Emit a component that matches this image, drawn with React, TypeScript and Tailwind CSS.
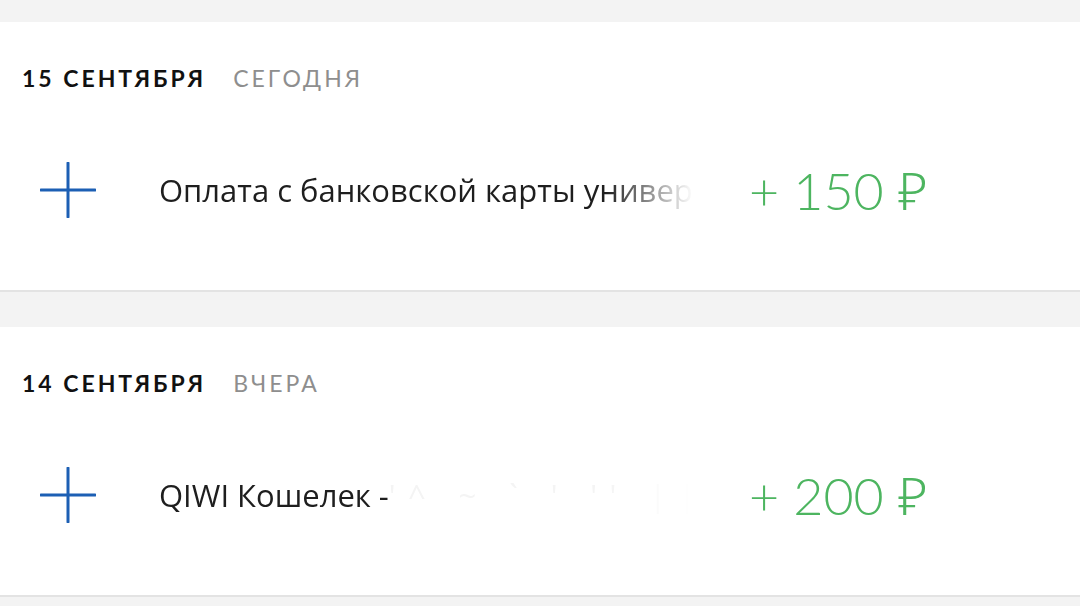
import React from "react";

function PlusIcon() {
  return (
    <svg width="56" height="56" viewBox="0 0 56 56" className="shrink-0">
      <path d="M28 1 V55 M1 28 H55" stroke="#1c5fb4" strokeWidth="3" strokeLinecap="round" fill="none" />
    </svg>
  );
}

function Card({
  date,
  rel,
  title,
  amount,
  extra,
}: {
  date: string;
  rel: string;
  title: string;
  amount: string;
  extra?: boolean;
}) {
  return (
    <div className="bg-white h-[270px] border-b-2 border-[#e3e3e3] flex flex-col">
      <div className="pl-[22px] pt-[41px] flex items-baseline gap-[27px] font-['Lato',sans-serif] text-[23px] leading-[30px] tracking-[0.13em]">
        <span className="font-bold text-[#111]">{date}</span>
        <span className="text-[#8e8e8e]">{rel}</span>
      </div>
      <div className="flex items-center pl-[40px] mt-[69px]">
        <PlusIcon />
        <div className="ml-[63px] w-[545px] overflow-hidden whitespace-nowrap font-['Open_Sans',sans-serif] text-[31px] text-[#1e1e1e] [mask-image:linear-gradient(to_right,black_82%,transparent_98%)]">
          {title}
          {extra && <span className="text-[#f4f4f4] tracking-[0.4em]">'^  ~  ` '  ''  ||</span>}
        </div>
        <div className="ml-[45px] font-['Lato','Open_Sans','Noto_Sans',sans-serif] font-light text-[52px] text-[#4db560] leading-none whitespace-nowrap">
          {amount}
        </div>
      </div>
    </div>
  );
}

export default function App() {
  return (
    <div className="w-[1080px] h-[606px] bg-[#f3f3f3] pt-[22px] overflow-hidden">
      <Card date="15 СЕНТЯБРЯ" rel="СЕГОДНЯ" title="Оплата с банковской карты универсальной" amount="+ 150 ₽" />
      <div className="h-[35px]" />
      <Card date="14 СЕНТЯБРЯ" rel="ВЧЕРА" title="QIWI Кошелек -" amount="+ 200 ₽" extra />
    </div>
  );
}
